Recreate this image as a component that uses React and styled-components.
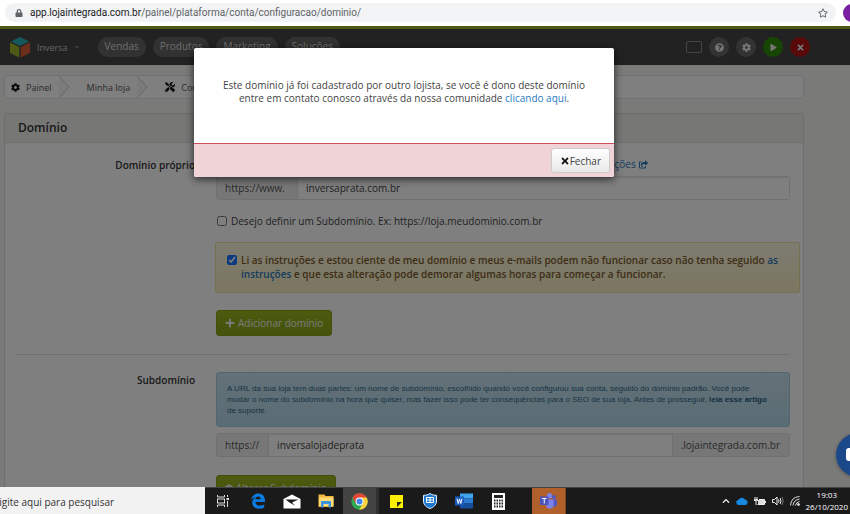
import React from "react";
import styled, { createGlobalStyle, css } from "styled-components";
import {
  FaCog, FaTools, FaPlus, FaPlay, FaTimes, FaQuestionCircle, FaShareSquare, FaLock, FaRegStar, FaChevronUp, FaCaretDown,
} from "react-icons/fa";

const Global = createGlobalStyle`
  * { box-sizing: border-box; }
  body { margin: 0; overflow: hidden; }
  body, button, input { font-family: "Open Sans", "Noto Sans", sans-serif; }
  svg { display: block; flex: none; }
  a { color: #2a7ac0; text-decoration: none; }
`;

const Screen = styled.div`
  height: 100vh;
  display: flex;
  flex-direction: column;
  color: #333;
  font-size: 10px;
`;

/* Browser address bar */
const BrowserBar = styled.div`
  flex: none;
  height: 26px;
  display: flex;
  align-items: center;
  gap: 7px;
  padding: 0 0 1px 5px;
  background: #fff;
  overflow: hidden;
`;
const AddressPill = styled.div`
  flex: 1;
  height: 19px;
  display: flex;
  align-items: center;
  gap: 7px;
  padding: 0 8px 0 10px;
  border-radius: 10px;
  background: #f1f3f4;
  color: #5f6368;
`;
const Address = styled.div`
  flex: 1;
  font-family: Roboto, sans-serif;
  font-size: 10px;
  b { font-weight: 400; color: #202124; }
`;
const Avatar = styled.div`
  flex: none;
  width: 18px;
  height: 18px;
  margin-right: -11px;
  border-radius: 50%;
  background: #7b1fa2;
`;

/* Store admin */
const Site = styled.main`
  flex: 1;
  min-height: 0;
  position: relative;
  overflow: hidden;
  background: #f4f4f0;
`;
const TopBar = styled.header`
  height: 39px;
  display: flex;
  align-items: center;
  padding: 0 40px 0 10px;
  border-top: 3px solid #9ab02a;
  background: #444;
`;
const StoreName = styled.button`
  display: flex;
  align-items: center;
  gap: 5px;
  margin: 0 17px 0 7px;
  padding: 0;
  border: 0;
  background: none;
  color: #ccc;
  font-size: 9px;
`;
const Nav = styled.nav`
  flex: 1;
  display: flex;
  gap: 7px;
`;
const NavPill = styled.a`
  height: 20px;
  padding: 0 7px;
  border-radius: 10px;
  background: #646464;
  color: #ddd;
  font-size: 10px;
  line-height: 19px;
`;
const Tools = styled.div`
  display: flex;
  align-items: center;
  gap: 7px;
`;
const Round = styled.button`
  width: 20px;
  height: 20px;
  display: grid;
  place-items: center;
  padding: 0;
  border: 0;
  border-radius: 50%;
  background: ${(p) => p.$bg || "#666"};
  color: #eee;
`;
const Ticket = styled.button`
  width: 16px;
  height: 12px;
  padding: 0;
  border: 1px solid #888;
  border-radius: 2px;
  background: none;
`;

const Content = styled.div`
  padding: 10px 46px 0 4px;
`;
const Crumbs = styled.nav`
  height: 24px;
  display: flex;
  align-items: center;
  margin-bottom: 14px;
  border: 1px solid #e2e2e2;
  border-radius: 3px;
  background: #fff;
`;
const Crumb = styled.a`
  height: 22px;
  display: flex;
  align-items: center;
  gap: 6px;
  padding: 0 7px 0 ${(p) => p.$left || 6}px;
  color: #555;
  font-size: 9px;
  svg { color: #111; }
`;
const Panel = styled.section`
  border: 1px solid #dcdcd8;
  border-radius: 3px 3px 0 0;
  background: #fff;
`;
const PanelTitle = styled.h1`
  height: 29px;
  margin: 0;
  padding: 0 13px;
  border-bottom: 1px solid #e2e2e2;
  background: #efefec;
  color: #333;
  font-size: 12px;
  font-weight: 600;
  line-height: 28px;
`;
const Row = styled.div`
  display: grid;
  grid-template-columns: 190px 1fr;
  column-gap: 21px;
  margin-right: 13px;
  padding-top: ${(p) => p.$top}px;
`;
const RowLabel = styled.label`
  text-align: right;
  font-size: 10px;
  font-weight: 600;
  line-height: 16px;
`;
const Help = styled.a`
  height: 14px;
  display: flex;
  align-items: center;
  gap: 3px;
  margin-bottom: 5px;
  padding-left: 271px;
  font-size: 10px;
`;
const Group = styled.div`
  height: 24px;
  display: flex;
  border: 1px solid #e0e0e0;
  border-radius: 3px;
  overflow: hidden;
  font-size: 10px;
  line-height: 22px;
`;
const Addon = styled.span`
  padding: 0 9px 0 8px;
  background: #eee;
  color: #555;
  &:first-child { min-width: ${(p) => p.$min}px; border-right: 1px solid #e0e0e0; }
  &:last-child { border-left: 1px solid #e0e0e0; }
`;
const Field = styled.input`
  flex: 1;
  min-width: 0;
  padding: 0 8px;
  border: 0;
  outline: 0;
  background: #fff;
  box-shadow: inset 0 1px 1px #e8e8e8;
  color: #444;
  font-size: 10px;
`;
const Check = styled.label`
  display: flex;
  align-items: flex-start;
  gap: 4px;
  line-height: 14px;
  input { flex: none; width: 10px; height: 10px; margin: 2px 0 0; accent-color: #1674ff; }
`;
const Option = styled(Check)`
  margin: 14px 0 14px 1px;
  color: #444;
  font-size: 10px;
`;
const Warning = styled.div`
  margin: 0 -10px 17px -1px;
  padding: 10px 12px 11px 11px;
  border: 1px solid #ece0a4;
  border-radius: 2px;
  background: linear-gradient(#fcf8e3, #f6edc0);
  color: #7d5a2c;
  font-size: 10px;
  font-weight: 600;
`;
const Info = styled.p`
  margin: 0 0 6px;
  padding: 10px 16px 10px 10px;
  border: 1px solid #a0cfe2;
  border-radius: 3px;
  background: linear-gradient(#c8e2f0, #b4d8e8);
  color: #2d6987;
  font-family: "Liberation Sans", sans-serif;
  font-size: 8px;
  line-height: 11px;
  a { color: #24607f; font-weight: 700; }
`;
const Green = styled.button`
  height: 26px;
  display: flex;
  align-items: center;
  gap: 3px;
  margin-top: ${(p) => p.$top || 0}px;
  padding: 0 8px;
  border: 1px solid #86a012;
  border-radius: 3px;
  background: linear-gradient(#98b61d, #8aa618);
  color: #f4f4f4;
  font-size: 10px;
`;
const Divider = styled.hr`
  margin: 18px 13px 0 11px;
  border: 0;
  border-top: 1px solid #e2e2e2;
`;
const Overlay = styled.div`
  position: absolute;
  inset: 0;
  display: flex;
  justify-content: center;
  align-items: flex-start;
  padding: 22px 42px 0 0;
  background: rgba(0, 0, 0, 0.5);
`;
const Dialog = styled.div`
  width: 420px;
  max-width: 90%;
  border-radius: 2px;
  background: #fff;
  box-shadow: 0 2px 8px rgba(0, 0, 0, 0.7);
  overflow: hidden;
`;
const Message = styled.p`
  margin: 0;
  padding: 31px 20px 38px;
  text-align: center;
  color: #444;
  font-size: 10px;
  line-height: 13px;
`;
const DialogFooter = styled.div`
  display: flex;
  justify-content: flex-end;
  padding: 4px;
  border-top: 1px solid #d0505a;
  background: #f0d3d7;
`;
const Close = styled.button`
  height: 25px;
  display: flex;
  align-items: center;
  padding: 0 8px;
  border: 1px solid #ccc;
  border-radius: 3px;
  background: linear-gradient(#fff, #e8e8e8);
  color: #444;
  font-size: 10px;
  svg { color: #111; }
`;
const Chat = styled.button`
  position: absolute;
  right: -30px;
  bottom: 10px;
  width: 44px;
  height: 44px;
  padding: 0 0 0 10px;
  border: 0;
  border-radius: 50%;
  background: #1b4888;
  box-shadow: 0 1px 4px rgba(0, 0, 0, 0.3);
`;

/* Taskbar */
const Taskbar = styled.footer`
  flex: none;
  height: 27px;
  display: flex;
  background: #1a1a1a;
  border-top: 1px solid #444;
`;
const Search = styled.input`
  width: 205px;
  margin-top: -1px;
  padding: 3px 0 0;
  text-indent: -8px;
  border: 0;
  outline: 0;
  background: #f2f2f2;
  font-size: 10px;
  color: #333;
  &::placeholder { color: #333; opacity: 1; }
`;
const TaskButton = styled.button`
  width: ${(p) => (p.$first ? 36 : 34)}px;
  display: grid;
  place-items: center;
  padding: 0;
  border: 0;
  background: none;
  ${(p) => p.$active && css`
    width: 36px;
    background: #434343;
    border-right: 3px solid #303030;
  `}
  ${(p) => p.$alert && css`
    margin-left: 17px;
    background: #b0602a;
    border-right: 1px solid #7a4520;
  `}
`;
const Tray = styled.div`
  margin-left: auto;
  display: flex;
  align-items: center;
  gap: 6px;
  padding-right: 2px;
  color: #eee;
`;
const Clock = styled.time`
  text-align: center;
  color: #fff;
  font-size: 8px;
  line-height: 12px;
`;

const Cube = () => (
  <svg width="20" height="22" viewBox="0 0 20 22">
    <path d="M10 1 19 5.500 10 10 1 5.500Z" fill="#2fb0bb" />
    <path d="M0 6.500 9.300 11V21.500L0 17Z" fill="#9bb62c" />
    <path d="M20 6.500 10.700 11V21.500L20 17Z" fill="#d95b35" />
  </svg>
);
const Chevron = () => (
  <svg width="11" height="22" viewBox="0 0 11 22">
    <path d="M0 0 10 11 0 22" fill="#f7f7f7" stroke="#ccc" />
  </svg>
);
const TaskView = () => (
  <svg width="14" height="14" viewBox="0 0 14 14" fill="none" stroke="#ddd">
    <path d="M1.500 1v2h7v-2M1.500 13v-2h7v2M11.500 1v2M11.500 7v6" />
    <rect x="1.500" y="5" width="7" height="4" />
    <path d="M10.500 5h2.500" strokeWidth="2" />
  </svg>
);
const Edge = () => (
  <svg width="16" height="16" viewBox="0 0 16 16">
    <path d="M1 7C2 2.500 5 .5 8.500.5 13 .5 15.300 4 15 9H5.300c.2 2.500 2 3.600 4.500 3.600 1.700 0 3.200-.5 4.400-1.200v3.200c-1.500.8-3.200 1.200-5 1.200-4.500 0-7-2.500-7-6 0-2.500 1.400-4.400 3.700-5.500C3.500 4.600 2 5.500 1 7Zm4.400-.7h5.300c0-1.900-.9-2.900-2.500-2.900S5.600 4.500 5.400 6.300Z" fill="#0a7ce0" />
  </svg>
);
const Mail = () => (
  <svg width="18" height="15" viewBox="0 0 18 15">
    <path d="M.5 5 9 .5 17.500 5v9.500H.5Z" fill="#fff" />
    <path d="M2.500 5.500h13L9 8.500l3 3.200-5.500-3.200Z" fill="#1a1a1a" />
  </svg>
);
const Folder = () => (
  <svg width="16" height="14" viewBox="0 0 16 14">
    <path d="M.5.500h6l1 1.500h8V13H.5Z" fill="#f4b73c" />
    <path d="M1 3.500h14.500V12H1Z" fill="#ffdc75" />
    <path d="M3 7h10v6.500h-2.500V10h-5v3.500H3Z" fill="#3a93dd" />
  </svg>
);
const Chrome = () => (
  <svg width="17" height="17" viewBox="0 0 48 48">
    <circle cx="24" cy="24" r="23" fill="#2da94f" />
    <path d="M24 24 4.100 12.500A23 23 0 0 1 43.900 12.500Z" fill="#e5443a" />
    <path d="M24 24V13H44.200A23 23 0 0 1 23 47l10.500-18Z" fill="#fdd23c" />
    <path d="M4.100 12.500 14 30l10-6Z" fill="#e5443a" />
    <circle cx="24" cy="24" r="11" fill="#fff" />
    <circle cx="24" cy="24" r="8.500" fill="#4285f4" />
  </svg>
);
const Note = () => (
  <svg width="13" height="13" viewBox="0 0 13 13">
    <path d="M0 0h13v13H0Z" fill="#fff000" />
    <path d="M7 12V7h5Z" fill="#222" />
  </svg>
);
const Shield = () => (
  <svg width="14" height="16" viewBox="0 0 14 16">
    <path d="M7 .5c2 1.400 4 1.800 6.500 1.800V8c0 4-3 6.300-6.500 7.500C3.500 14.300.5 12 .5 8V2.300C3 2.300 5 1.900 7 .5Z" fill="#1c78d0" stroke="#e4f1fb" />
    <path d="M3.500 4.500h7v5h-7ZM7 4.500v5M3.500 7h7" fill="none" stroke="#fff" />
  </svg>
);
const Word = () => (
  <svg width="18" height="16" viewBox="0 0 18 16">
    <path d="M5 .5h13v5H5Z" fill="#41a5ee" />
    <path d="M5 5.500h13v5H5Z" fill="#2b7cd3" />
    <path d="M5 10.500h13v5H5Z" fill="#174f9e" />
    <path d="M0 3.500h9v9H0Z" fill="#185abd" />
    <path d="m2 5.500 1.200 5L4.500 6l1.300 4.500 1.200-5" fill="none" stroke="#fff" />
  </svg>
);
const Calculator = () => (
  <svg width="13" height="17" viewBox="0 0 13 17">
    <path d="M0 0h13v17H0Z" fill="#fff" />
    <path d="M2 2h9v3H2Z" fill="#222" />
    <path d="M2 7.500h9M2 10.500h9M2 13.500h9" stroke="#222" strokeWidth="2" strokeDasharray="1.500 1" />
  </svg>
);
const Teams = () => (
  <svg width="17" height="16" viewBox="0 0 17 16">
    <circle cx="14" cy="4" r="2" fill="#5059c9" />
    <circle cx="9.500" cy="2.800" r="2.700" fill="#7b83eb" />
    <path d="M11 6.500h6V11c0 2-2 3-4 2.500Z" fill="#5059c9" />
    <path d="M6 6.500h7.500V12c0 5-7.500 5-7.500 0Z" fill="#7b83eb" />
    <path d="M0 3.500h8.500V12H0Z" fill="#4b53bc" />
    <path d="M2 5.500h4.500M4.250 5.500V10.500" stroke="#fff" />
  </svg>
);
const Cloud = () => (
  <svg width="12" height="8" viewBox="0 0 12 8">
    <path d="M3 8a2.600 2.600 0 0 1-.3-5.200A3.500 3.500 0 0 1 9 2.500 2.800 2.800 0 0 1 9.500 8Z" fill="#1688e0" />
  </svg>
);
const Battery = () => (
  <svg width="12" height="9" viewBox="0 0 12 9" fill="none" stroke="#eee">
    <path d="M5 2.500h5.500v5H3.500M11.500 4v2M1 0v2M3 0v2M2 4v4" />
    <path d="M4 3h6v4H4ZM0 2h4v2H0Z" fill="#ddd" stroke="none" />
  </svg>
);
const Volume = () => (
  <svg width="12" height="10" viewBox="0 0 12 10" fill="none" stroke="#eee">
    <path d="M.5 3.500h2L5 1v8L2.500 6.500h-2Z" />
    <path d="M6.500 3.500q1 1.500 0 3M8 2q2 3 0 6" />
    <path d="M10 1q2.500 4 0 8" stroke="#777" />
  </svg>
);
const Wifi = () => (
  <svg width="10" height="10" viewBox="0 0 10 10" fill="none" stroke="#ddd">
    <path d="M.5 9.500Q1 1 9.500.5M3 9.500Q3.500 4 9.500 3M5.500 9.500Q6 6 9.500 5.500" />
    <circle cx="8.500" cy="8.500" r="1" fill="#ddd" />
  </svg>
);

const apps = [
  ["Visão de tarefas", TaskView, { $first: true }],
  ["Edge", Edge],
  ["Email", Mail],
  ["Arquivos", Folder],
  ["Chrome", Chrome, { $active: true }],
  ["Notas", Note],
  ["Segurança", Shield],
  ["Word", Word],
  ["Calculadora", Calculator],
  ["Teams", Teams, { $alert: true }],
];

export default function App() {
  return (
    <Screen>
      <Global />
      <BrowserBar>
        <AddressPill>
          <FaLock size={8} />
          <Address><b>app.lojaintegrada.com.br</b>/painel/plataforma/conta/configuracao/dominio/</Address>
          <FaRegStar size={10} />
        </AddressPill>
        <Avatar />
      </BrowserBar>

      <Site>
        <TopBar>
          <Cube />
          <StoreName>Inversa <FaCaretDown size={8} color="#777" /></StoreName>
          <Nav>
            {["Vendas", "Produtos", "Marketing", "Soluções"].map((n) => (
              <NavPill href="#" key={n}>{n}</NavPill>
            ))}
          </Nav>
          <Tools>
            <Ticket aria-label="Tela" />
            <Round aria-label="Ajuda"><FaQuestionCircle size={9} /></Round>
            <Round aria-label="Configurações"><FaCog size={9} /></Round>
            <Round aria-label="Ver loja" $bg="#2f8a06"><FaPlay size={7} /></Round>
            <Round aria-label="Sair" $bg="#b01212"><FaTimes size={9} /></Round>
          </Tools>
        </TopBar>

        <Content>
          <Crumbs>
            <Crumb href="#"><FaCog size={9} />Painel</Crumb>
            <Chevron />
            <Crumb href="#" $left={17}>Minha loja</Crumb>
            <Chevron />
            <Crumb href="#" $left={17}><FaTools size={10} />Configurações</Crumb>
          </Crumbs>

          <Panel>
            <PanelTitle>Domínio</PanelTitle>
            <Row $top={14}>
              <RowLabel htmlFor="dominio">Domínio próprio</RowLabel>
              <div>
                <Help href="#">Ver nossas dicas e as instruções <FaShareSquare size={9} /></Help>
                <Group>
                  <Addon $min={81}>https://www.</Addon>
                  <Field id="dominio" defaultValue="inversaprata.com.br" />
                </Group>
                <Option>
                  <input type="checkbox" />
                  <span>Desejo definir um Subdomínio. Ex: https://loja.meudominio.com.br</span>
                </Option>
                <Warning>
                  <Check>
                    <input type="checkbox" defaultChecked />
                    <span>
                      Li as instruções e estou ciente de meu domínio e meus e-mails podem não funcionar caso não tenha seguido <a href="#">as instruções</a> e que esta alteração pode demorar algumas horas para começar a funcionar.
                    </span>
                  </Check>
                </Warning>
                <Green><FaPlus size={10} />Adicionar domínio</Green>
              </div>
            </Row>
            <Divider />
            <Row $top={17}>
              <RowLabel htmlFor="subdominio">Subdomínio</RowLabel>
              <div>
                <Info>
                  A URL da sua loja tem duas partes: um nome de subdomínio, escolhido quando você configurou sua conta, seguido do domínio padrão. Você pode mudar o nome do subdomínio na hora que quiser, mas fazer isso pode ter consequências para o SEO de sua loja. Antes de prosseguir, <a href="#">leia esse artigo</a> de suporte.
                </Info>
                <Group>
                  <Addon $min={52}>https://</Addon>
                  <Field id="subdominio" defaultValue="inversalojadeprata" />
                  <Addon>.lojaintegrada.com.br</Addon>
                </Group>
                <Green $top={18}><FaCog size={8} />Alterar Subdomínio</Green>
              </div>
            </Row>
          </Panel>
        </Content>

        <Overlay>
          <Dialog role="dialog" aria-modal="true">
            <Message>
              Este domínio já foi cadastrado por outro lojista, se você é dono deste domínio entre em contato conosco através da nossa comunidade <a href="#">clicando aqui</a>.
            </Message>
            <DialogFooter><Close><FaTimes size={10} />Fechar</Close></DialogFooter>
          </Dialog>
        </Overlay>
        <Chat aria-label="Abrir chat">
          <svg width="16" height="14" viewBox="0 0 16 14"><rect width="16" height="13" rx="3" fill="#fff" /></svg>
        </Chat>
      </Site>

      <Taskbar>
        <Search placeholder="Digite aqui para pesquisar" aria-label="Pesquisar" />
        {apps.map(([label, Icon, props]) => (
          <TaskButton key={label} aria-label={label} {...props}><Icon /></TaskButton>
        ))}
        <Tray>
          <FaChevronUp size={8} />
          <Cloud />
          <Battery />
          <Volume />
          <Wifi />
          <Clock>19:03<br />26/10/2020</Clock>
        </Tray>
      </Taskbar>
    </Screen>
  );
}
